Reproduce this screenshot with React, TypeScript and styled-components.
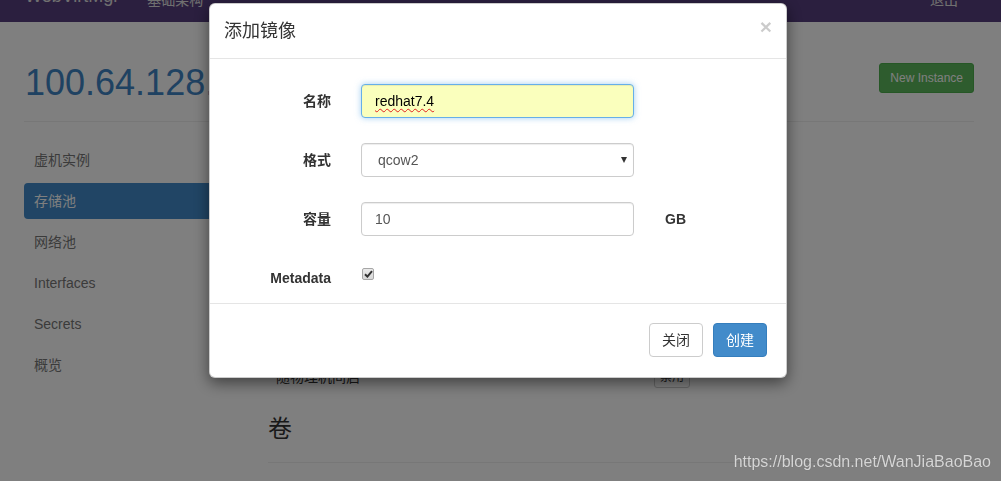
import React from "react";
import styled, { createGlobalStyle } from "styled-components";

const GlobalStyle = createGlobalStyle`
  html, body {
    margin: 0;
    padding: 0;
    background: #fff;
    overflow: hidden;
  }
  body {
    font-family: "Liberation Sans", Arial, "Noto Sans CJK SC", sans-serif;
    font-size: 14px;
    line-height: 1.42857;
    color: #333;
  }
  * {
    box-sizing: border-box;
  }
`;

// page behind the dialog
const Navbar = styled.div`
  height: 22px;
  background: #563e7e;
  display: flex;
  align-items: flex-start;
  overflow: hidden;
  padding: 0 16px 0 25px;
`;

const Brand = styled.div`
  font-size: 18px;
  line-height: 20px;
  margin-top: -14px;
  color: #e0e0e0;
  margin-right: 28px;
`;

const NavLink = styled.div<{ $right?: boolean }>`
  font-size: 14px;
  line-height: 20px;
  margin-top: -10px;
  color: #e0e0e0;
  margin-left: ${(p) => (p.$right ? "auto" : "0")};
  margin-right: ${(p) => (p.$right ? "27px" : "0")};
`;

const Container = styled.div`
  width: 950px;
  margin-left: 24px;
`;

const PageHeader = styled.div`
  display: flex;
  justify-content: space-between;
  align-items: flex-start;
  padding: 41px 0 18px;
  border-bottom: 1px solid #eee;
`;

const HostTitle = styled.h1`
  margin: 0 0 0 1px;
  font-size: 36px;
  line-height: 40px;
  font-weight: 400;
  color: #3f84c4;
`;

const GreenButton = styled.button`
  font-family: inherit;
  font-size: 12px;
  line-height: 18px;
  padding: 5px 10px;
  border: 1px solid #4cae4c;
  border-radius: 3px;
  background: #5cb85c;
  color: #fff;
`;

const Row = styled.div`
  display: flex;
  gap: 15px;
`;

const SideNav = styled.ul`
  list-style: none;
  margin: 20px 0 0;
  padding: 0;
  width: 229px;
  display: flex;
  flex-direction: column;
  gap: 5px;
`;

const SideItem = styled.li<{ $active?: boolean }>`
  padding: 8px 10px;
  line-height: 20px;
  border-radius: 4px;
  color: ${(p) => (p.$active ? "#fff" : "#777")};
  background: ${(p) => (p.$active ? "#428bca" : "transparent")};
`;

const Main = styled.div`
  flex: 1;
  padding-top: 14px;
`;

// pool details, all but the last row sit under the dialog
const InfoTable = styled.table`
  width: 100%;
  border-collapse: collapse;
  margin-bottom: 20px;

  td {
    padding: 8px 8px;
    height: 37px;
    line-height: 20px;
    vertical-align: middle;
  }
  td:first-child {
    width: 378px;
  }
`;

const SmallButton = styled.button`
  font-family: inherit;
  font-size: 12px;
  line-height: 18px;
  padding: 1px 5px;
  border: 1px solid #ccc;
  border-radius: 3px;
  background: #fff;
  color: #333;
`;

const SectionHeader = styled.div`
  border-bottom: 1px solid #eee;
  padding-bottom: 20px;
`;

const SectionTitle = styled.h3`
  margin: 0;
  font-size: 24px;
  line-height: 26px;
  font-weight: 400;
`;

// overlay + dialog
const Backdrop = styled.div`
  position: fixed;
  inset: 0;
  background: rgba(0, 0, 0, 0.5);
`;

const Dialog = styled.div`
  position: fixed;
  top: 3px;
  left: 209px;
  width: 578px;
  background: #fff;
  border: 1px solid rgba(0, 0, 0, 0.2);
  border-radius: 6px;
  box-shadow: 0 5px 15px rgba(0, 0, 0, 0.5);
`;

const DialogHeader = styled.div`
  display: flex;
  justify-content: space-between;
  align-items: center;
  padding: 15px 15px 15px 14px;
  border-bottom: 1px solid #e5e5e5;
`;

const DialogTitle = styled.h4`
  margin: 0;
  font-size: 18px;
  line-height: 24px;
  font-weight: 400;
`;

const Close = styled.span`
  font-size: 21px;
  font-weight: 700;
  line-height: 1;
  color: #000;
  opacity: 0.2;
  margin-top: -9px;
  margin-right: -1px;
`;

const DialogBody = styled.div`
  padding: 25px 15px 15px;
  display: grid;
  grid-template-columns: 106px 273px auto;
  column-gap: 30px;
  row-gap: 25px;
`;

const Label = styled.label`
  font-weight: 700;
  text-align: right;
  padding-top: 7px;
  line-height: 20px;
`;

const Unit = styled.span`
  font-weight: 700;
  padding-top: 7px;
  line-height: 20px;
  margin-left: 1px;
`;

const Field = styled.div<{ $filled?: boolean }>`
  height: 34px;
  padding: 6px 13px;
  font-size: 14px;
  line-height: 20px;
  color: ${(p) => (p.$filled ? "#000" : "#555")};
  background: ${(p) => (p.$filled ? "#faffbd" : "#fff")};
  border: 1px solid ${(p) => (p.$filled ? "#66afe9" : "#ccc")};
  border-radius: 4px;
  box-shadow: ${(p) =>
    p.$filled
      ? "inset 0 1px 1px rgba(0,0,0,.075), 0 0 6px rgba(102,175,233,.6)"
      : "inset 0 1px 1px rgba(0,0,0,.075)"};
`;

const Misspelled = styled.span`
  text-decoration: underline wavy #e02020;
  text-decoration-thickness: 1px;
  text-underline-offset: 2px;
  text-decoration-skip-ink: none;
`;

const SelectBox = styled.div`
  position: relative;
  height: 34px;
  border: 1px solid #ccc;
  border-radius: 4px;
  padding: 6px 16px;
  line-height: 20px;
  color: #555;
  box-shadow: inset 0 1px 1px rgba(0, 0, 0, 0.075);
`;

const Caret = styled.span`
  position: absolute;
  right: 6px;
  top: 13px;
  width: 0;
  height: 0;
  border-left: 3.5px solid transparent;
  border-right: 3.5px solid transparent;
  border-top: 6px solid #333;
`;

const CheckCell = styled.div`
  padding-top: 7px;
  padding-left: 1px;
`;

const CheckBox = styled.span`
  display: flex;
  align-items: center;
  justify-content: center;
  width: 12px;
  height: 12px;
  border: 1px solid #a6a6a6;
  border-radius: 2px;
  background: linear-gradient(#eaeaea, #d8d8d8);
`;

const DialogFooter = styled.div`
  display: flex;
  justify-content: flex-end;
  gap: 10px;
  padding: 19px 19px 20px;
  border-top: 1px solid #e5e5e5;
`;

const Button = styled.button<{ $primary?: boolean }>`
  font-family: inherit;
  font-size: 14px;
  line-height: 20px;
  padding: 6px 12px;
  border-radius: 4px;
  border: 1px solid ${(p) => (p.$primary ? "#357ebd" : "#ccc")};
  background: ${(p) => (p.$primary ? "#428bca" : "#fff")};
  color: ${(p) => (p.$primary ? "#fff" : "#333")};
`;

const Watermark = styled.div`
  position: fixed;
  right: 10px;
  bottom: 9px;
  font-size: 16px;
  line-height: 20px;
  color: #d6d6d6;
  text-shadow: 0 0 1px rgba(0, 0, 0, 0.25);
`;

const hiddenRows = 6;

export default function App() {
  return (
    <>
      <GlobalStyle />
      <Navbar>
        <Brand>WebVirtMgr</Brand>
        <NavLink>基础架构</NavLink>
        <NavLink $right>退出</NavLink>
      </Navbar>
      <Container>
        <PageHeader>
          <HostTitle>100.64.128.21</HostTitle>
          <GreenButton>New Instance</GreenButton>
        </PageHeader>
        <Row>
          <SideNav>
            <SideItem>虚机实例</SideItem>
            <SideItem $active>存储池</SideItem>
            <SideItem>网络池</SideItem>
            <SideItem>Interfaces</SideItem>
            <SideItem>Secrets</SideItem>
            <SideItem>概览</SideItem>
          </SideNav>
          <Main>
            <InfoTable>
              <tbody>
                {Array.from({ length: hiddenRows }).map((_, i) => (
                  <tr key={i}>
                    <td />
                    <td />
                  </tr>
                ))}
                <tr>
                  <td>随物理机间启</td>
                  <td>
                    <SmallButton>禁用</SmallButton>
                  </td>
                </tr>
              </tbody>
            </InfoTable>
            <SectionHeader>
              <SectionTitle>卷</SectionTitle>
            </SectionHeader>
          </Main>
        </Row>
      </Container>

      <Backdrop />
      <Dialog>
        <DialogHeader>
          <DialogTitle>添加镜像</DialogTitle>
          <Close>×</Close>
        </DialogHeader>
        <DialogBody>
          <Label>名称</Label>
          <Field $filled>
            <Misspelled>redhat7.4</Misspelled>
          </Field>
          <span />

          <Label>格式</Label>
          <SelectBox>
            qcow2
            <Caret />
          </SelectBox>
          <span />

          <Label>容量</Label>
          <Field>10</Field>
          <Unit>GB</Unit>

          <Label>Metadata</Label>
          <CheckCell>
            <CheckBox>
              <svg width="9" height="8" viewBox="0 0 9 8">
                <path d="M1 4.2 L3.4 6.6 L8 1.2" fill="none" stroke="#333" strokeWidth="2" />
              </svg>
            </CheckBox>
          </CheckCell>
          <span />
        </DialogBody>
        <DialogFooter>
          <Button>关闭</Button>
          <Button $primary>创建</Button>
        </DialogFooter>
      </Dialog>
      <Watermark>https://blog.csdn.net/WanJiaBaoBao</Watermark>
    </>
  );
}
